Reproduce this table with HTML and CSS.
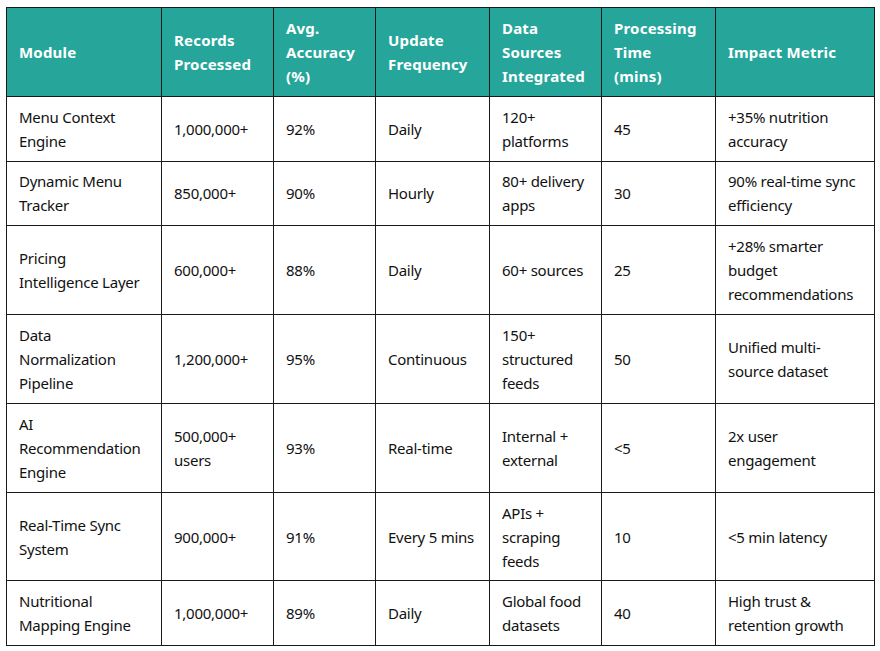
FILE: index.html
```html
<!DOCTYPE html>
<html lang="en">
<head>
<meta charset="utf-8">
<title>Module Metrics</title>
<link rel="stylesheet" href="styles.css">
</head>
<body>
<div class="wrap">
<table class="metrics">
  <colgroup>
    <col class="c1"><col class="c2"><col class="c3"><col class="c4"><col class="c5"><col class="c6"><col class="c7">
  </colgroup>
  <thead>
    <tr>
      <th>Module</th>
      <th>Records Processed</th>
      <th>Avg. Accuracy (%)</th>
      <th>Update Frequency</th>
      <th>Data Sources Integrated</th>
      <th>Processing Time (mins)</th>
      <th>Impact Metric</th>
    </tr>
  </thead>
  <tbody>
    <tr>
      <td>Menu Context Engine</td><td>1,000,000+</td><td>92%</td><td>Daily</td><td>120+ platforms</td><td>45</td><td>+35% nutrition accuracy</td>
    </tr>
    <tr>
      <td>Dynamic Menu Tracker</td><td>850,000+</td><td>90%</td><td>Hourly</td><td>80+ delivery apps</td><td>30</td><td>90% real-time sync efficiency</td>
    </tr>
    <tr>
      <td>Pricing Intelligence Layer</td><td>600,000+</td><td>88%</td><td>Daily</td><td>60+ sources</td><td>25</td><td>+28% smarter budget recommendations</td>
    </tr>
    <tr>
      <td>Data Normalization Pipeline</td><td>1,200,000+</td><td>95%</td><td>Continuous</td><td>150+ structured feeds</td><td>50</td><td>Unified multi-source dataset</td>
    </tr>
    <tr>
      <td>AI Recommendation Engine</td><td>500,000+ users</td><td>93%</td><td>Real-time</td><td>Internal + external</td><td>&lt;5</td><td>2x user engagement</td>
    </tr>
    <tr>
      <td>Real-Time Sync System</td><td>900,000+</td><td>91%</td><td>Every 5 mins</td><td>APIs + scraping feeds</td><td>10</td><td>&lt;5 min latency</td>
    </tr>
    <tr>
      <td>Nutritional Mapping Engine</td><td>1,000,000+</td><td>89%</td><td>Daily</td><td>Global food datasets</td><td>40</td><td>High trust &amp; retention growth</td>
    </tr>
  </tbody>
</table>
</div>
</body>
</html>
```

FILE: styles.css
```css
html, body {
  margin: 0;
  padding: 0;
  background: #ffffff;
}

.wrap {
  padding: 7px 6px;
}

.metrics {
  border-collapse: collapse;
  table-layout: fixed;
  width: 868px;
  font-family: "Noto Sans", "Open Sans", sans-serif;
  font-size: 15px;
  line-height: 24px;
  color: #111;
}

.c1 { width: 155px; }
.c2 { width: 112px; }
.c3 { width: 102px; }
.c4 { width: 114px; }
.c5 { width: 112px; }
.c6 { width: 114px; }
.c7 { width: 159px; }

.metrics th,
.metrics td {
  border: 1px solid #1a1a1a;
  padding: 7.9px 12px;
  text-align: left;
  vertical-align: middle;
}

.metrics td {
  letter-spacing: -0.25px;
}

.metrics th {
  background: #26a69a;
  color: #ffffff;
  font-weight: 700;
  letter-spacing: 0.2px;
}
```
